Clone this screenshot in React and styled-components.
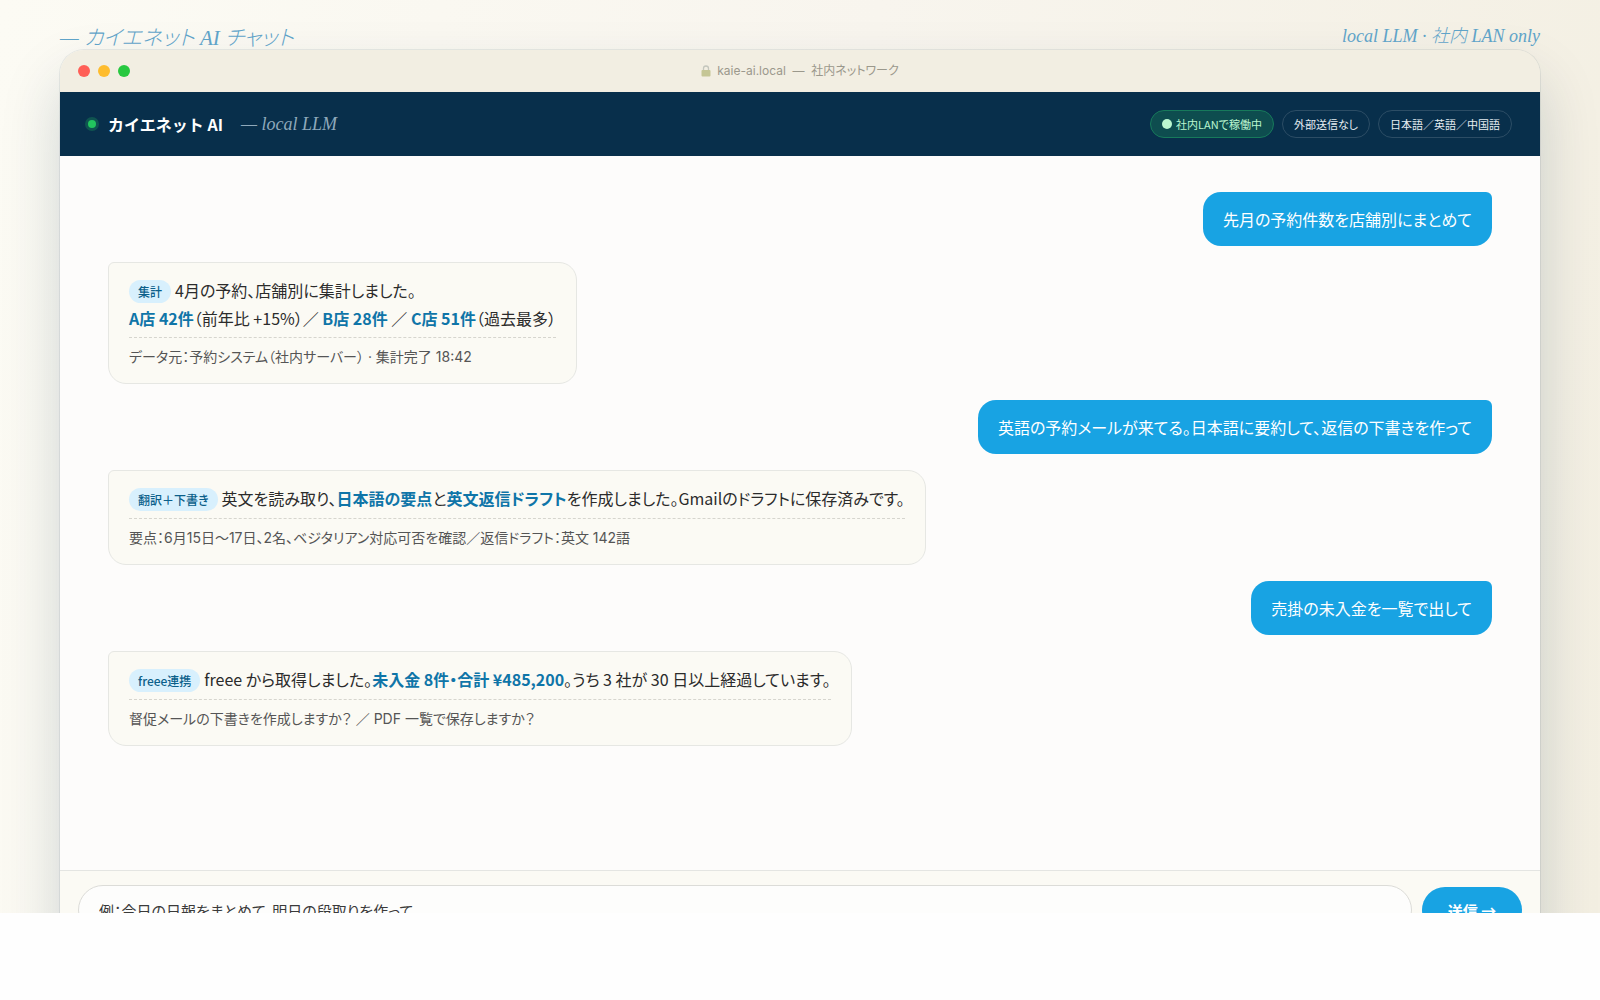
import React from "react";
import styled, { createGlobalStyle } from "styled-components";

const sans = `"Noto Sans CJK JP", "Noto Sans", sans-serif`;
const ui = `Inter, "Noto Sans CJK JP", sans-serif`;
const serif = `"Liberation Serif", "Noto Sans CJK JP", serif`;

const GlobalStyle = createGlobalStyle`
  * {
    box-sizing: border-box;
  }

  body {
    margin: 0;
    background: #fefefe;
    color: #2b2b2b;
    font-family: ${sans};
    font-feature-settings: "palt";
  }
`;

const Stage = styled.main`
  height: calc(100vh - 87px);
  padding: 24px 60px 0;
  overflow: hidden;
  background: linear-gradient(100deg, #fcfbf4 0%, #f8f5ee 50%, #f3efe2 100%);
`;

const Captions = styled.div`
  display: flex;
  justify-content: space-between;
  height: 26px;
  color: #5fa3c8;
  font-family: ${serif};
  font-style: italic;
  font-weight: 300;
  white-space: nowrap;
`;

const Caption = styled.span`
  font-size: ${({ $large }) => ($large ? "21px" : "18px")};
  line-height: ${({ $large }) => ($large ? "28px" : "24px")};
`;

const Window = styled.section`
  border-radius: 24px 24px 0 0;
  box-shadow:
    0 0 0 1px rgba(10, 47, 74, 0.08),
    0 30px 60px rgba(10, 47, 74, 0.18);
`;

const TitleBar = styled.div`
  display: flex;
  align-items: center;
  height: 42px;
  padding: 0 18px;
  border-radius: 24px 24px 0 0;
  background: #f2eee2;
`;

const Lights = styled.div`
  display: flex;
  flex: 1;
  gap: 8px;
`;

const Light = styled.span`
  width: 12px;
  height: 12px;
  border-radius: 50%;
  background: ${({ $color }) => $color};
`;

const Address = styled.div`
  display: flex;
  align-items: center;
  gap: 6px;
  color: #9b988c;
  font-family: ${ui};
  font-size: 12px;
  line-height: 16px;
  white-space: pre;
`;

const Spacer = styled.div`
  flex: 1;
`;

const Header = styled.header`
  display: flex;
  align-items: center;
  justify-content: space-between;
  height: 64px;
  padding: 0 28px;
  background: #082f4b;
`;

const Brand = styled.div`
  display: flex;
  align-items: center;
  color: #fff;
`;

const Online = styled.span`
  width: 8px;
  height: 8px;
  margin-right: 12px;
  border-radius: 50%;
  background: #22c55e;
  box-shadow: 0 0 0 3px rgba(34, 197, 94, 0.25);
`;

const BrandName = styled.h1`
  margin: 0 18px 0 0;
  font-feature-settings: normal;
  font-size: 16px;
  font-weight: 700;
`;

const BrandNote = styled.span`
  color: #8fa9bb;
  font-family: ${serif};
  font-size: 18px;
  font-style: italic;
`;

const Pills = styled.div`
  display: flex;
  gap: 8px;
`;

const Pill = styled.span`
  display: flex;
  align-items: center;
  gap: 4px;
  height: 28px;
  padding: 0 11px;
  border: 1px solid ${({ $live }) => ($live ? "#177a5b" : "#2c4d65")};
  border-radius: 14px;
  background: ${({ $live }) => ($live ? "#0e4d4f" : "transparent")};
  color: ${({ $live }) => ($live ? "#bbf7d0" : "#e6edf2")};
  font-size: 11px;
  font-weight: 400;
`;

const PillDot = styled.span`
  width: 10px;
  height: 10px;
  border-radius: 50%;
  background: currentColor;
`;

const Chat = styled.div`
  display: flex;
  flex-direction: column;
  gap: 16px;
  min-height: 714px;
  padding: 36px 48px;
  background: #fdfcfb;
`;

const Question = styled.div`
  align-self: flex-end;
  padding: 14px 20px;
  border-radius: 18px 6px 18px 18px;
  background: #18a3e3;
  color: #fff;
  font-size: 16px;
  font-weight: 400;
  line-height: 26px;
`;

const Answer = styled.article`
  align-self: flex-start;
  padding: 14px 20px;
  border: 1px solid #e6e7e3;
  border-radius: 6px 18px 18px 18px;
  background: #fbfaf4;
  font-size: 16px;
  line-height: 27px;

  p {
    margin: 0;
  }

  strong {
    color: #0f75a8;
    font-weight: 700;
  }
`;

const Tag = styled.span`
  margin-right: 4px;
  padding: 3px 9px;
  border-radius: 12px;
  background: #d8f0fd;
  color: #0b5f8a;
  font-size: 12px;
  font-weight: 500;
`;

const Note = styled.div`
  margin-top: 5px;
  padding-top: 7px;
  border-top: 1px dashed #d6d5ce;
  color: #555;
  font-family: ${ui};
  font-size: 14px;
  line-height: 24px;
`;

const Composer = styled.form`
  display: flex;
  align-items: center;
  gap: 10px;
  padding: 14px 18px;
  border-top: 1px solid #e4e5e2;
  background: #fbfaf4;
`;

const Prompt = styled.input`
  flex: 1;
  min-width: 0;
  height: 50px;
  padding: 0 20px;
  border: 1px solid #dcdcd8;
  border-radius: 25px;
  background: #fdfdfc;
  font-family: ${sans};
  font-feature-settings: "palt";
  font-size: 15px;

  &::placeholder {
    color: #3a3a3a;
    opacity: 1;
  }
`;

const Send = styled.button`
  width: 100px;
  height: 46px;
  border: 0;
  border-radius: 23px;
  background: #18a3e3;
  color: #fff;
  font-family: ${sans};
  font-size: 15px;
  font-weight: 700;
`;

function Lock() {
  return (
    <svg width="10" height="12" viewBox="0 0 10 12" aria-hidden="true">
      <path
        d="M2.5 6V3.5a2.5 2.5 0 0 1 5 0V6"
        fill="none"
        stroke="#c4c6bd"
        strokeWidth="1.3"
      />
      <rect x="0.5" y="5" width="9" height="6.5" rx="1" fill="#c5c695" />
    </svg>
  );
}

export default function App() {
  return (
    <>
      <GlobalStyle />
      <Stage lang="ja">
        <Captions>
          <Caption $large>— カイエネット AI チャット</Caption>
          <Caption>local LLM · 社内 LAN only</Caption>
        </Captions>
        <Window>
          <TitleBar>
            <Lights>
              <Light $color="#ff5f57" />
              <Light $color="#febc2e" />
              <Light $color="#28c840" />
            </Lights>
            <Address>
              <Lock />
              <span>kaie-ai.local  —  社内ネットワーク</span>
            </Address>
            <Spacer />
          </TitleBar>
          <Header>
            <Brand>
              <Online />
              <BrandName>カイエネット AI</BrandName>
              <BrandNote>— local LLM</BrandNote>
            </Brand>
            <Pills>
              <Pill $live>
                <PillDot />
                社内LANで稼働中
              </Pill>
              <Pill>外部送信なし</Pill>
              <Pill>日本語／英語／中国語</Pill>
            </Pills>
          </Header>
          <Chat>
            <Question>先月の予約件数を店舗別にまとめて</Question>
            <Answer>
              <p>
                <Tag>集計</Tag>
                4月の予約、店舗別に集計しました。
                <br />
                <strong>A店 42件</strong>（前年比 +15%）／ <strong>B店 28件</strong>{" "}
                ／ <strong>C店 51件</strong>（過去最多）
              </p>
              <Note>データ元：予約システム（社内サーバー） · 集計完了 18:42</Note>
            </Answer>
            <Question>
              英語の予約メールが来てる。日本語に要約して、返信の下書きを作って
            </Question>
            <Answer>
              <p>
                <Tag>翻訳＋下書き</Tag>
                英文を読み取り、<strong>日本語の要点</strong>と
                <strong>英文返信ドラフト</strong>
                を作成しました。Gmailのドラフトに保存済みです。
              </p>
              <Note>
                要点：6月15日〜17日、2名、ベジタリアン対応可否を確認／返信ドラフト：英文
                142語
              </Note>
            </Answer>
            <Question>売掛の未入金を一覧で出して</Question>
            <Answer>
              <p>
                <Tag>freee連携</Tag>
                freee から取得しました。<strong>未入金 8件・合計 ¥485,200</strong>
                。うち 3 社が 30 日以上経過しています。
              </p>
              <Note>督促メールの下書きを作成しますか？ ／ PDF 一覧で保存しますか？</Note>
            </Answer>
          </Chat>
          <Composer onSubmit={(e) => e.preventDefault()}>
            <Prompt
              aria-label="メッセージ"
              placeholder="例：今日の日報をまとめて、明日の段取りを作って"
            />
            <Send type="submit">送信 →</Send>
          </Composer>
        </Window>
      </Stage>
    </>
  );
}
